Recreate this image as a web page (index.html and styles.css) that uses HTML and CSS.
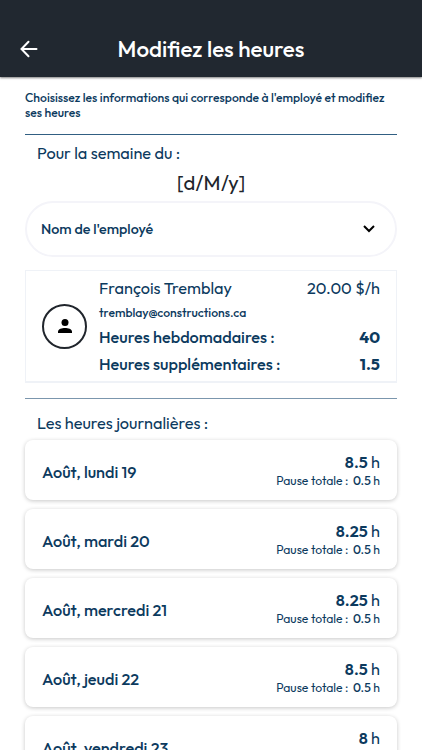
FILE: index.html
```html
<!DOCTYPE html>
<html lang="fr">
<head>
    <meta charset="UTF-8">
    <meta name="viewport" content="width=device-width, initial-scale=1.0">
    <title>Modifiez les heures</title>
    <link rel="stylesheet" href="styles.css">
</head>
<body>
    <header class="topbar">
        <svg class="back" viewBox="0 0 24 24"><path d="M19.500 12H5M11.500 4.800L4.500 12l7 7.200"/></svg>
        <h1>Modifiez les heures</h1>
    </header>
    <main class="content">
        <p class="intro">Choisissez les informations qui corresponde à l'employé et modifiez<br>ses heures</p>
        <h2 class="label week">Pour la semaine du :</h2>
        <p class="date">[d/M/y]</p>
        <div class="select">
            <span>Nom de l'employé</span>
            <svg class="chevron" viewBox="0 0 12 8"><path d="M1 1l5 5 5-5"/></svg>
        </div>
        <section class="employee">
            <div class="avatar">
                <svg viewBox="0 0 14 14"><circle cx="7" cy="3.500" r="3.500"/><path d="M0 14v-1.500C0 10 4 9 7 9s7 1 7 3.500V14z"/></svg>
            </div>
            <div class="details">
                <div class="row name"><span>François Tremblay</span><span>20.00 $/h</span></div>
                <div class="email">tremblay@constructions.ca</div>
                <div class="row total"><span>Heures hebdomadaires :</span><b>40</b></div>
                <div class="row total"><span>Heures supplémentaires :</span><b>1.5</b></div>
            </div>
        </section>
        <h2 class="label daily">Les heures journalières :</h2>
        <div class="days">
            <div class="day">
                <span class="day-name">Août, lundi 19</span>
                <div class="hours">
                    <div class="worked"><b>8.5</b> h</div>
                    <div class="pause">Pause totale : <b>0.5</b> h</div>
                </div>
            </div>
            <div class="day">
                <span class="day-name">Août, mardi 20</span>
                <div class="hours">
                    <div class="worked"><b>8.25</b> h</div>
                    <div class="pause">Pause totale : <b>0.5</b> h</div>
                </div>
            </div>
            <div class="day">
                <span class="day-name">Août, mercredi 21</span>
                <div class="hours">
                    <div class="worked"><b>8.25</b> h</div>
                    <div class="pause">Pause totale : <b>0.5</b> h</div>
                </div>
            </div>
            <div class="day">
                <span class="day-name">Août, jeudi 22</span>
                <div class="hours">
                    <div class="worked"><b>8.5</b> h</div>
                    <div class="pause">Pause totale : <b>0.5</b> h</div>
                </div>
            </div>
            <div class="day">
                <span class="day-name">Août, vendredi 23</span>
                <div class="hours">
                    <div class="worked"><b>8</b> h</div>
                    <div class="pause">Pause totale : <b>0.5</b> h</div>
                </div>
            </div>
        </div>
    </main>
</body>
</html>
```
FILE: styles.css
```css
* {
    box-sizing: border-box;
}
body {
    margin: 0;
    height: 750px;
    overflow: hidden;
    background-color: #fff;
    color: #0c3a5e;
    font-family: Outfit, Lato, sans-serif;
}
h1, h2, p {
    margin: 0;
}
.topbar {
    display: grid;
    grid-template-columns: 24px 1fr 24px;
    align-items: center;
    height: 77px;
    padding: 21px 17px 0;
    background-color: #212830;
    box-shadow: 0 1px 2px rgba(0, 0, 0, 0.5);
    color: #fff;
}
.topbar h1 {
    font-size: 22.4px;
    font-weight: 500;
    line-height: 28px;
    text-align: center;
}
.back {
    width: 24px;
    height: 24px;
    fill: none;
    stroke: #fff;
    stroke-width: 2;
    stroke-linecap: round;
}
.content {
    padding: 13px 25px 0;
}
.intro {
    height: 45px;
    border-bottom: 1px solid #315f82;
    font-size: 12.2px;
    font-weight: 500;
    line-height: 15px;
    white-space: nowrap;
}
.label {
    padding-left: 12px;
    font-size: 16.3px;
    font-weight: 400;
    line-height: 22px;
}
.week {
    margin-top: 7px;
}
.date {
    margin-top: 6px;
    color: #20252c;
    font-size: 20.3px;
    line-height: 26px;
    text-align: center;
}
.select {
    display: flex;
    align-items: center;
    justify-content: space-between;
    height: 56px;
    margin-top: 5px;
    padding: 0 20px 0 14px;
    border: 2px solid #f4f4f9;
    border-radius: 28px;
    font-size: 14.3px;
    font-weight: 500;
}
.chevron {
    width: 12px;
    height: 8px;
    fill: none;
    stroke: #000;
    stroke-width: 2;
}
.employee {
    display: flex;
    align-items: center;
    height: 113px;
    margin-top: 13px;
    padding: 0 16px;
    border: 1px solid #eff2f7;
    border-bottom-width: 2px;
}
.avatar {
    display: flex;
    align-items: center;
    justify-content: center;
    width: 45px;
    height: 45px;
    margin-right: 12px;
    border: 2px solid #20252c;
    border-radius: 50%;
}
.avatar svg {
    width: 14px;
    height: 14px;
}
.details {
    flex: 1;
}
.row {
    display: flex;
    justify-content: space-between;
    line-height: 27px;
}
.name {
    font-size: 16.3px;
}
.email {
    font-size: 12.2px;
    font-weight: 500;
    line-height: 22px;
}
.total {
    font-size: 16.3px;
    font-weight: 500;
}
.daily {
    margin-top: 15px;
    padding-top: 13px;
    border-top: 1px solid #7b96ad;
}
.days {
    display: flex;
    flex-direction: column;
    gap: 9px;
    margin-top: 6px;
}
.day {
    display: flex;
    align-items: center;
    justify-content: space-between;
    height: 60px;
    padding: 0 17px;
    border-radius: 8px;
    background-color: #fff;
    box-shadow: 0 1px 4px rgba(0, 0, 0, 0.22);
}
.day-name {
    padding-top: 4px;
    font-size: 16.3px;
    font-weight: 500;
}
.hours {
    padding-top: 1px;
    text-align: right;
}
.worked {
    font-size: 16.3px;
    line-height: 19px;
}
.worked b {
    font-weight: 600;
}
.pause {
    font-size: 12.2px;
    line-height: 17px;
}
.pause b {
    margin-left: 2px;
    font-weight: 500;
}
```
